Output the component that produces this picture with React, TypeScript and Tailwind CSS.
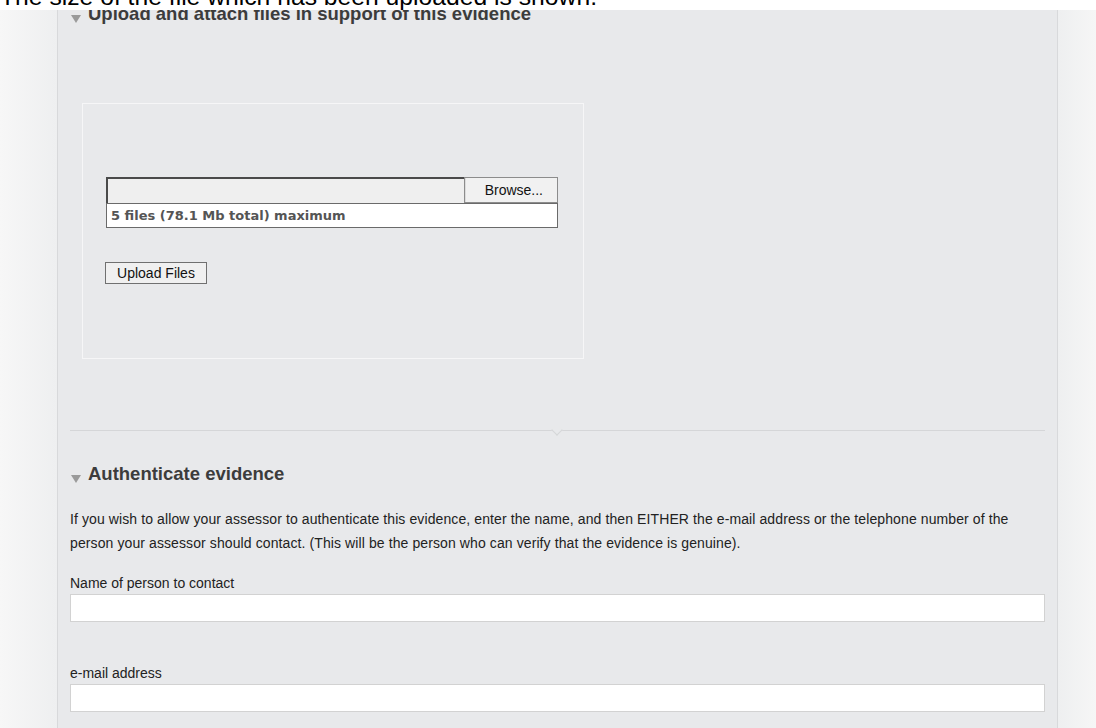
import type { ReactNode } from 'react';

function Caret() {
    return (
        <svg width="10" height="8" viewBox="0 0 10 8" className="inline-block shrink-0 align-[-3px]">
            <path d="M0 0 H10 L5 8 Z" fill="#9a9a9a" />
        </svg>
    );
}

function SectionHeading({ children, className }: { children: ReactNode; className?: string }) {
    return (
        <h2 className={`flex h-[20px] items-baseline text-[18.5px] leading-[20px] font-bold text-[#3c3c3c] ${className ?? ''}`}>
            <span className="ml-[1px] w-[17px]">
                <Caret />
            </span>
            {children}
        </h2>
    );
}

function FilePicker() {
    return (
        <div className="ml-[23px] w-[452px]">
            <div className="flex h-[26px]">
                <div className="flex-1 border-t-2 border-l-2 border-[#4a4a4a] bg-[#efefef]" />
                <button className="w-[94px] border border-[#8c8c8c] bg-[#f1f1f1] pr-[14px] text-right text-[14px] text-[#111] shadow-[inset_1px_0_0_#dcdcdc]">
                    Browse...
                </button>
            </div>
            <div className="h-[25px] border border-[#6a6a6a] bg-white pl-[4px] font-['DejaVu_Sans'] text-[13px] leading-[23px] font-bold text-[#555]">
                5 files (78.1 Mb total) maximum
            </div>
        </div>
    );
}

function TextField({ label, className }: { label: string; className?: string }) {
    return (
        <div className={className}>
            <label className="block text-[14px] leading-[18px] text-[#222]">{label}</label>
            <input
                type="text"
                className="mt-[2px] block h-[28px] w-full border border-[#d2d2d2] bg-white outline-none"
            />
        </div>
    );
}

export default function App() {
    return (
        <div className="h-[728px] w-[1096px] overflow-hidden bg-white font-['Liberation_Sans',Arial,sans-serif]">
            <div className="h-[10px] overflow-hidden bg-white">
                <p className="-mt-[15px] text-[24.7px] leading-none whitespace-nowrap text-black">
                    The size of the file which has been uploaded is shown.
                </p>
            </div>

            <div className="flex h-[718px]">
                <div className="w-[57px] bg-linear-to-r from-[#f7f7f7] to-[#eeeff0]" />

                <main className="w-[1001px] overflow-hidden border-x border-[#d8d9db] bg-[#e8e9eb] px-[12px]">
                    <SectionHeading className="-mt-[6px]">
                        Upload and attach files in support of this evidence
                    </SectionHeading>

                    <div className="mt-[79px] ml-[12px] h-[256px] w-[502px] border border-[#f6f6f7] pt-[73px]">
                        <FilePicker />
                        <button className="mt-[34px] ml-[22px] h-[22px] w-[102px] border border-[#707070] bg-[#f0f0f0] text-[14px] leading-[20px] text-[#111]">
                            Upload Files
                        </button>
                    </div>

                    <div className="relative mt-[71px] h-px bg-[#d5d6d8]">
                        <div className="absolute top-[-4px] left-[483px] h-[8px] w-[8px] rotate-45 border-r border-b border-[#d5d6d8] bg-[#e8e9eb]" />
                    </div>

                    <SectionHeading className="mt-[33px]">Authenticate evidence</SectionHeading>

                    <p className="mt-[23px] text-[14px] leading-[24px] tracking-[0.1px] text-[#222]">
                        If you wish to allow your assessor to authenticate this evidence, enter the name, and then EITHER the
                        e-mail address or the telephone number of the
                        <br />
                        person your assessor should contact. (This will be the person who can verify that the evidence is
                        genuine).
                    </p>

                    <TextField label="Name of person to contact" className="mt-[19px]" />
                    <TextField label="e-mail address" className="mt-[42px]" />
                </main>

                <div className="flex-1 bg-linear-to-r from-[#eeeff0] to-[#f6f6f6]" />
            </div>
        </div>
    );
}
